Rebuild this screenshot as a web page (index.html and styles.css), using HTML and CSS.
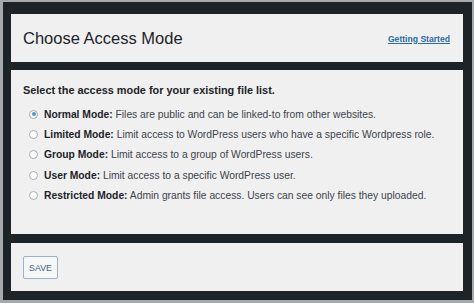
FILE: index.html
```html
<!DOCTYPE html>
<html>
<head>
<meta charset="utf-8">
<link rel="stylesheet" href="styles.css">
</head>
<body>
<div class="frame">
  <div class="panel header">
    <h1 class="title">Choose Access Mode</h1>
    <a class="help" href="#">Getting Started</a>
  </div>
  <div class="panel body">
    <p class="lead">Select the access mode for your existing file list.</p>
    <ul class="modes">
      <li class="mode"><span class="radio checked"></span><span><b>Normal Mode:</b> Files are public and can be linked-to from other websites.</span></li>
      <li class="mode"><span class="radio"></span><span><b>Limited Mode:</b> Limit access to WordPress users who have a specific Wordpress role.</span></li>
      <li class="mode"><span class="radio"></span><span><b>Group Mode:</b> Limit access to a group of WordPress users.</span></li>
      <li class="mode"><span class="radio"></span><span><b>User Mode:</b> Limit access to a specific WordPress user.</span></li>
      <li class="mode"><span class="radio"></span><span><b>Restricted Mode:</b> Admin grants file access. Users can see only files they uploaded.</span></li>
    </ul>
  </div>
  <div class="panel footer">
    <button class="save">SAVE</button>
  </div>
</div>
</body>
</html>
```

FILE: styles.css
```css
* { box-sizing: border-box; }
html, body { margin: 0; padding: 0; }
body {
  width: 474px;
  height: 303px;
  background: #a7aaad;
  font-family: "Liberation Sans", Arial, sans-serif;
  color: #1d2327;
}
.frame {
  margin: 2px 2px 3px 3px;
  height: 298px;
  background: #1d2327;
  padding: 12px 9px 9px 8px;
  display: flex;
  flex-direction: column;
  gap: 8px;
}
.panel {
  background: #f0f0f1;
}
.header {
  height: 48px;
  display: flex;
  align-items: center;
  justify-content: space-between;
  padding: 0 13px 0 12px;
}
.title {
  margin: 0;
  font-size: 16.5px;
  font-weight: 400;
  color: #1d2327;
}
.help {
  font-size: 8.6px;
  font-weight: 700;
  color: #2c6aa6;
  text-decoration: underline;
  margin-top: 1px;
}
.body {
  height: 164px;
  padding: 12px 12px 0 12px;
}
.lead {
  margin: 0 0 6px 0;
  font-size: 10.9px;
  font-weight: 700;
  line-height: 16px;
  white-space: nowrap;
}
.modes {
  list-style: none;
  margin: 0;
  padding: 0 0 0 6px;
}
.mode {
  display: flex;
  align-items: center;
  gap: 6px;
  height: 20.4px;
  font-size: 10.3px;
  color: #3c434a;
  white-space: nowrap;
}
.mode b { color: #1d2327; }
.radio {
  width: 9px;
  height: 9px;
  border-radius: 50%;
  border: 1px solid #a7aaad;
  background: #fff;
  flex: none;
  display: flex;
  align-items: center;
  justify-content: center;
}
.radio.checked::after {
  content: "";
  width: 4px;
  height: 4px;
  border-radius: 50%;
  background: #4f94d4;
}
.footer {
  height: 48px;
  margin-top: 1px;
  padding: 13px 12px 0 12px;
}
.save {
  width: 35px;
  height: 23px;
  padding: 0;
  background: #f6f7f7;
  border: 1px solid #9db3c9;
  border-radius: 2px;
  color: #3f6188;
  font-family: "Liberation Sans", Arial, sans-serif;
  font-size: 8.8px;
  font-weight: 400;
}
```
